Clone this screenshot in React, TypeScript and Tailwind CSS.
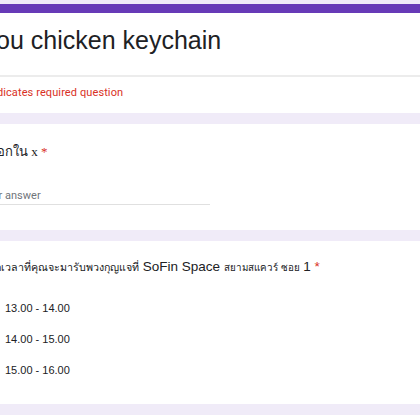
const options = ["13.00 - 14.00", "14.00 - 15.00", "15.00 - 16.00"]

export default function App() {
    return (
        <div className="w-[420px] h-[420px] overflow-hidden bg-[#f0ebf8] font-['Liberation_Sans','Noto_Sans',sans-serif] text-[#202124]">
            <div className="w-[480px] -ml-[40px] pt-[4px] flex flex-col gap-[11px]">

                {/* Header card */}
                <div className="bg-white rounded-lg border-t-[9px] border-[#673ab7]">
                    <div className="pl-[25px] pt-[12px] pb-[20px] border-b-2 border-[#ececec]">
                        <h1 className="-ml-[32px] text-[25px] leading-[30px] whitespace-nowrap">Keyou chicken keychain</h1>
                    </div>
                    <div className="pl-[20px] pt-[8px] pb-[12px] font-['Roboto',sans-serif] text-[11px] leading-[16px] tracking-[0.1px] text-[#d93025]">
                        * Indicates required question
                    </div>
                </div>

                {/* Question 1 */}
                <div className="bg-white rounded-lg pl-[20px] pt-[18px] pb-[25px]">
                    <div className="-ml-[17px] text-[13px] leading-[20px] whitespace-nowrap font-['Liberation_Serif',serif]">
                        ชื่อที่บอกใน x <span className="text-[#d93025]">*</span>
                    </div>
                    <div className="mt-[26px] w-[230px] border-b border-[#e0e0e0] font-['Roboto',sans-serif] text-[11px] leading-[16px] text-[#70757a]">
                        Your answer
                    </div>
                </div>

                {/* Question 2 */}
                <div className="bg-white rounded-lg pl-[20px] pt-[16px] pb-[24px]">
                    <div className="-ml-[2px] text-[13.5px] leading-[20px] whitespace-nowrap">
                        <span className="text-[10.7px]">เลือกเวลาที่คุณจะมารับพวงกุญแจที่</span> SoFin Space <span className="text-[9.8px]">สยามสแควร์ ซอย</span> 1 <span className="text-[#d93025]">*</span>
                    </div>
                    <div className="mt-[20px] flex flex-col gap-[11px]">
                        {options.map(opt => (
                            <label key={opt} className="-ml-[8px] flex items-center gap-[13px] h-[20px]">
                                <span className="w-[20px] h-[20px] rounded-full border-2 border-[#5f6368]" />
                                <span className="text-[11px]">{opt}</span>
                            </label>
                        ))}
                    </div>
                </div>

                <div className="bg-white rounded-lg h-[40px]" />
            </div>
        </div>
    )
}
